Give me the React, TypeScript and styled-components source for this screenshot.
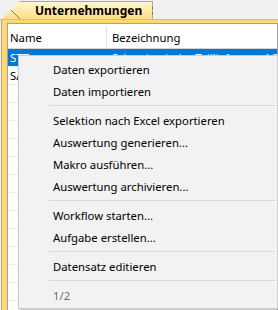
import React from "react";
import styled, { createGlobalStyle } from "styled-components";

const Global = createGlobalStyle`
  html, body { margin: 0; padding: 0; background: #f0f0f0; }
  body { font-family: "Noto Sans", "Open Sans", sans-serif; font-size: 11.3px; color: #000; }
`;

const Page = styled.div`
  position: relative;
  width: 278px;
  height: 310px;
  overflow: hidden;
  background: #f0f0f0;
  display: flex;
  flex-direction: column;
`;

const TabStrip = styled.div`
  height: 20px;
  flex-shrink: 0;
  display: flex;
  align-items: flex-end;
  padding-left: 2px;
  box-sizing: border-box;
  border-bottom: 1px solid #d9c27a;
`;

const Tab = styled.div`
  position: relative;
  height: 18px;
  width: 151px;
  box-sizing: border-box;
  padding-left: 33px;
  padding-right: 6px;
  display: flex;
  align-items: center;
  gap: 9px;
  background: linear-gradient(#fff6cf, #ffdc84);
  border-top: 1px solid #a8a8a8;
  border-right: 1px solid #a8a8a8;
  clip-path: polygon(18px 0, 100% 0, 100% 100%, 0 100%);
  &::before {
    content: "";
    position: absolute;
    left: 0;
    top: -1px;
    width: 19px;
    height: 19px;
    background: linear-gradient(to top right, transparent calc(50% - 0.7px), #7a7a7a 50%, transparent calc(50% + 0.7px));
  }
`;

const TabTitle = styled.span`
  font-weight: bold;
  font-size: 12px;
  white-space: nowrap;
`;

const CloseX = styled.span`
  font-size: 12px;
  font-weight: bold;
  line-height: 1;
`;

const Frame = styled.div`
  flex: 1;
  margin-left: 1px;
  border-left: 1px solid #b8a878;
  background: #ffd775;
  padding: 3px 0 0 5px;
  display: flex;
  min-height: 0;
`;

const Grid = styled.div`
  flex: 1;
  background: #fff;
  border-left: 1px solid #a0a0a0;
  border-top: 1px solid #a0a0a0;
  border-right: 1px solid #a0a0a0;
  display: flex;
  flex-direction: column;
  overflow: hidden;
`;

const Row = styled.div<{ $header?: boolean; $selected?: boolean }>`
  display: grid;
  grid-template-columns: 99px 1fr;
  height: ${(p) => (p.$header ? 25 : 18)}px;
  padding-top: ${(p) => (p.$header ? 2 : 0)}px;
  flex-shrink: 0;
  box-sizing: border-box;
  border-bottom: 1px solid ${(p) => (p.$header ? "#d5d5d5" : "#ececec")};
  background: ${(p) => (p.$selected ? "#0078d7" : "#fff")};
  color: ${(p) => (p.$selected ? "#fff" : "#000")};
`;

const Cell = styled.div<{ $header?: boolean }>`
  padding-left: 2px;
  display: flex;
  align-items: center;
  white-space: nowrap;
  overflow: hidden;
  border-right: 1px solid ${(p) => (p.$header ? "#e0e0e0" : "transparent")};
  &:last-child { border-right: none; padding-left: 5px; }
`;

const Menu = styled.div`
  position: absolute;
  left: 18px;
  top: 55px;
  width: 260px;
  box-sizing: border-box;
  background: #f2f2f2;
  border: 1px solid #cccccc;
  padding: 2px;
  box-shadow: 2px 2px 3px rgba(0, 0, 0, 0.25);
`;

const Item = styled.div<{ $disabled?: boolean }>`
  height: 22px;
  display: flex;
  align-items: center;
  padding-left: 32px;
  color: ${(p) => (p.$disabled ? "#6d6d6d" : "#000")};
  white-space: nowrap;
`;

const Separator = styled.div`
  height: 1px;
  margin: 3px 0 3px 28px;
  background: #d7d7d7;
`;

const rows = Array.from({ length: 14 }, (_, i) => i);

export default function App() {
  return (
    <Page>
      <Global />
      <TabStrip>
        <Tab>
          <TabTitle>Unternehmungen</TabTitle>
          <CloseX>✕</CloseX>
        </Tab>
      </TabStrip>
      <Frame>
        <Grid>
          <Row $header>
            <Cell $header>Name</Cell>
            <Cell $header>Bezeichnung</Cell>
          </Row>
          <Row $selected>
            <Cell>STT</Cell>
            <Cell>Schweizerische Teillieferung AG</Cell>
          </Row>
          <Row>
            <Cell>SAG</Cell>
            <Cell>Stahl AG</Cell>
          </Row>
          {rows.map((r) => (
            <Row key={r}>
              <Cell />
              <Cell />
            </Row>
          ))}
        </Grid>
      </Frame>
      <Menu>
        <Item>Daten exportieren</Item>
        <Item>Daten importieren</Item>
        <Separator />
        <Item>Selektion nach Excel exportieren</Item>
        <Item>Auswertung generieren...</Item>
        <Item>Makro ausführen...</Item>
        <Item>Auswertung archivieren...</Item>
        <Separator />
        <Item>Workflow starten...</Item>
        <Item>Aufgabe erstellen...</Item>
        <Separator />
        <Item>Datensatz editieren</Item>
        <Separator />
        <Item $disabled>1/2</Item>
      </Menu>
    </Page>
  );
}
